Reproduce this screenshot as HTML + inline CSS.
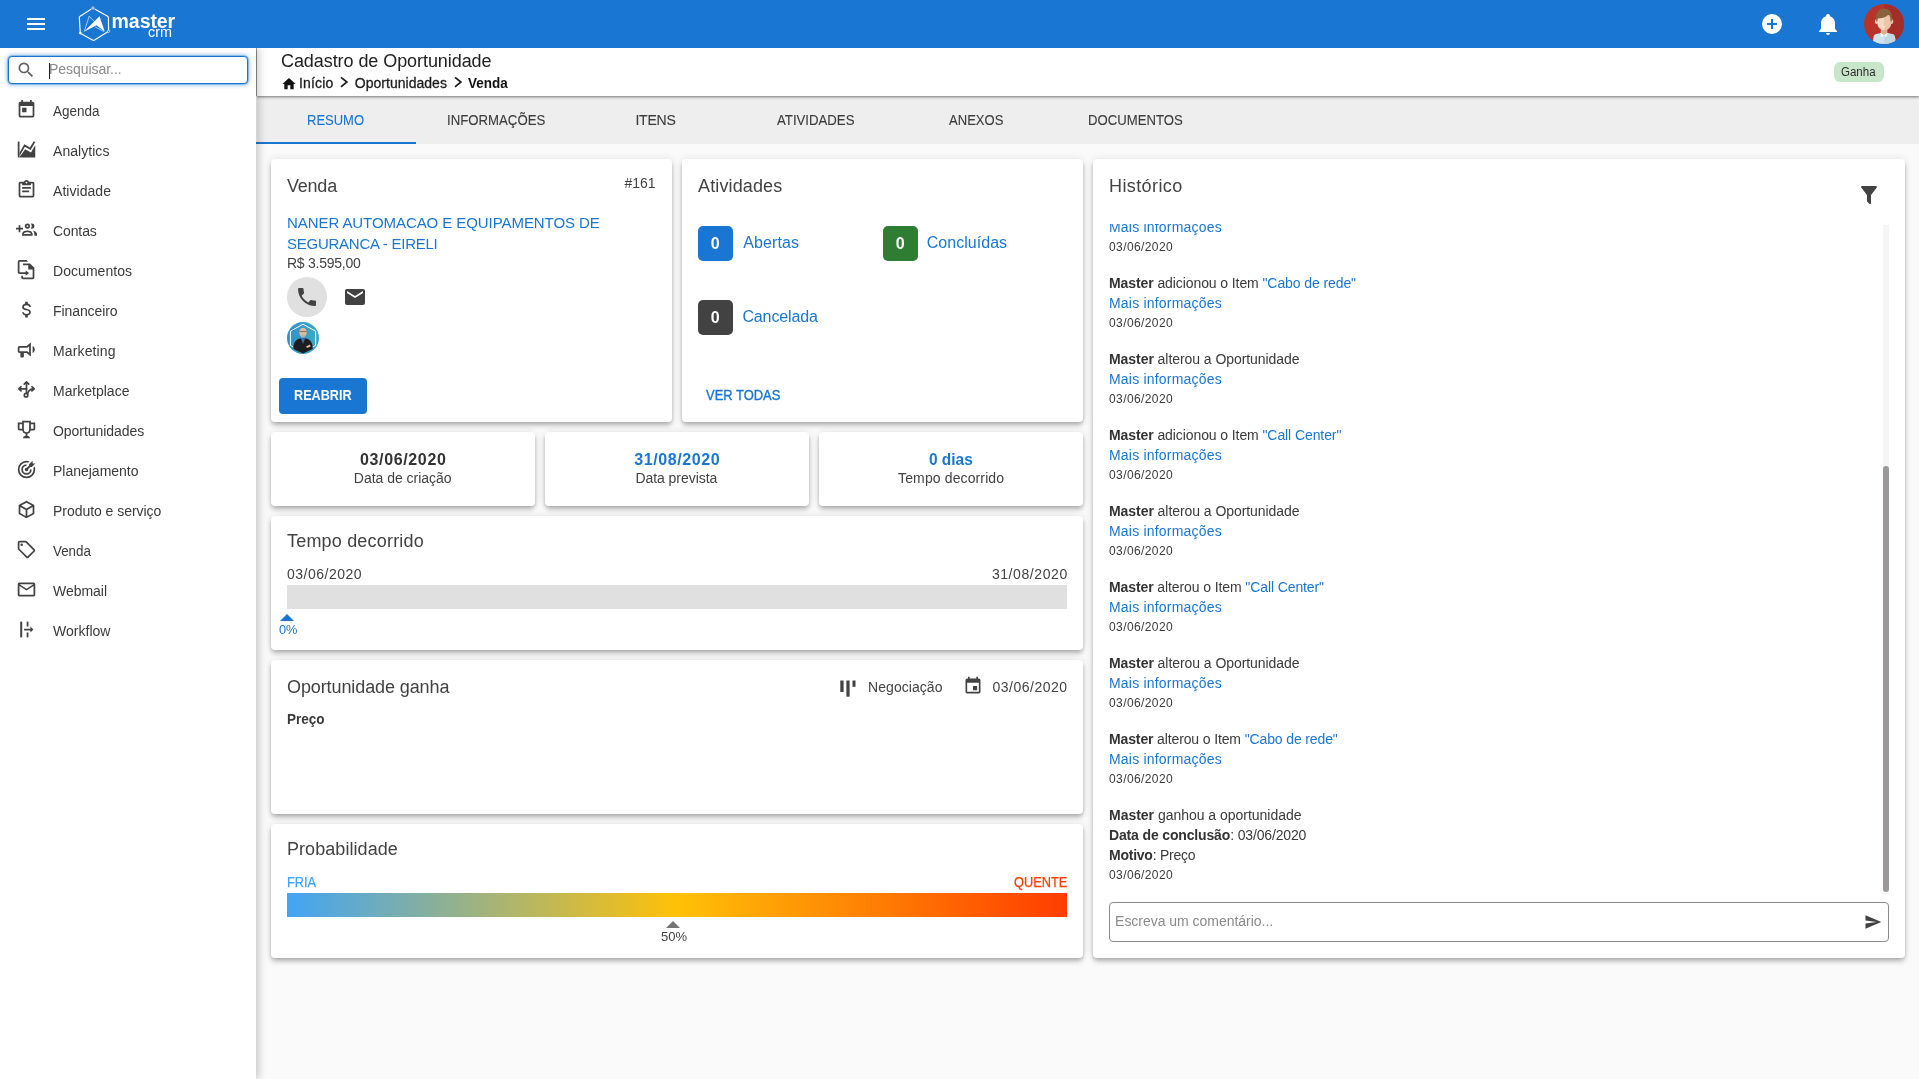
<!DOCTYPE html>
<html lang="pt-BR">
<head>
<meta charset="utf-8">
<title>Cadastro de Oportunidade - Master CRM</title>
<style>
*{box-sizing:border-box;margin:0;padding:0}
html,body{width:1919px;height:1079px;overflow:hidden;background:#fafafa}
body{font:400 14px/20px "Liberation Sans",sans-serif;color:#333}
.page,.page *{position:absolute}
.page{will-change:transform}
.page b{position:static;font-weight:700;color:#333}
.page p a,.page p b{position:static}
.t{white-space:nowrap;transform-origin:0 50%;line-height:20px;font-weight:400;font-style:normal;text-decoration:none}
a{color:#1976d2}
ul{list-style:none}
.i{display:block;overflow:visible}
.topbar{background:#1976d2;z-index:5}
.sidebar{background:#fff;z-index:4;box-shadow:3px 0 8px rgba(0,0,0,.2)}
.search{border:1px solid #1b72cc;border-radius:4px;background:#fff;box-shadow:0 0 0 .6px rgba(25,118,210,.5),0 0 4px 1px rgba(25,118,210,.5)}
.caret{width:1px;height:16px;background:#222}
.pagehead{background:#fff;z-index:3;box-shadow:0 1px 2px rgba(0,0,0,.38),0 2px 3px rgba(0,0,0,.12),-1px 0 0 rgba(0,0,0,.32)}
.chip{background:#c8e6c9;border-radius:6px}
.tabs{background:#eee;z-index:2}
.ink{height:2px;background:#1976d2}
.card{background:#fff;border-radius:4px;box-shadow:0 2px 4px -1px rgba(0,0,0,.2),0 4px 5px 0 rgba(0,0,0,.14),0 1px 10px 0 rgba(0,0,0,.12)}
.round{width:40px;height:40px;border-radius:50%;background:#e0e0e0}
.btn{background:#1976d2;border:0;border-radius:4px;font:inherit}
.badge{border-radius:5px}
.bar{width:780px;height:24px;background:#e0e0e0}
.grad{background:linear-gradient(90deg,#42a5f5 0%,#ffc107 50%,#ff3d00 100%)}
.tri{width:0;height:0;border:7px solid transparent;border-top-width:0;border-bottom-width:7px}
.scroll{overflow:hidden}
.track{left:774px;top:1px;width:6px;height:669px;background:#f5f5f5}
.thumb{left:774px;top:242px;width:6px;height:426px;background:#9b9999;border-radius:3px}
.comment{border:1px solid #8a8a8a;border-radius:4px}
</style>
</head>
<body>
<div class="page" style="left:0px;top:0px;width:1919px;height:1079px;">
  <header class="topbar" style="left:0px;top:0px;width:1919px;height:48px;">
    <svg class="i" style="left:24px;top:12px" width="24" height="24" viewBox="0 0 24 24" fill="#fff"><path d="M3,6H21V8H3V6M3,11H21V13H3V11M3,16H21V18H3V16Z"/></svg>
    <svg class="i" style="left:76px;top:4px" width="36" height="40" viewBox="0 0 36 40" fill="none" stroke="#fff" stroke-linejoin="round"><path d="M18.6,4.9L31.6,12.2Q32.4,12.7 32.4,13.6L32.6,27.2L18.6,36.1Q17.5,36.8 16.4,36.1L4.3,29.2L3.3,13.6Q3.3,12.7 4.1,12.2L15.4,4.9" stroke-width="1.15"/><circle cx="16.9" cy="4" r="1.1" fill="#1976d2" stroke-width=".8"/><circle cx="32.5" cy="27.3" r="1.1" fill="#1976d2" stroke-width=".7"/><circle cx="4.4" cy="29.1" r="1.1" fill="#fff" stroke-width=".5"/><path d="M8,27.8L23.5,12.3L28.7,27.5L20.4,21.2Z" fill="#fff" stroke="none"/><path d="M8.2,27.6L13.2,12.2L18.4,17.6M19,22.8L28.2,27.6" stroke-width=".6"/></svg>
    <span class="t logo" style="left:111.6px;top:11.2px;font-size:19.5px;font-weight:700;color:#fff;letter-spacing:-0.07px;">master</span>
    <span class="t logo" style="left:148.2px;top:22.4px;font-size:15.5px;color:#fff;transform:scaleX(0.9274);">crm</span>
    <svg class="i" style="left:1760px;top:12px" width="24" height="24" viewBox="0 0 24 24" fill="#fff"><path d="M17,13H13V17H11V13H7V11H11V7H13V11H17M12,2A10,10 0 0,0 2,12A10,10 0 0,0 12,22A10,10 0 0,0 22,12A10,10 0 0,0 12,2Z"/></svg>
    <svg class="i" style="left:1816px;top:12px" width="24" height="24" viewBox="0 0 24 24" fill="#fff"><path d="M21,19V20H3V19L5,17V11C5,7.9 7.03,5.17 10,4.29C10,4.19 10,4.1 10,4A2,2 0 0,1 12,2A2,2 0 0,1 14,4C14,4.1 14,4.19 14,4.29C16.97,5.17 19,7.9 19,11V17L21,19M14,21A2,2 0 0,1 12,23A2,2 0 0,1 10,21"/></svg>
    <svg class="i" style="left:1864px;top:4px" width="40" height="40" viewBox="0 0 40 40"><defs><clipPath id="av"><circle cx="20" cy="20" r="20"/></clipPath></defs><g clip-path="url(#av)"><rect width="40" height="40" fill="#b8342b"/><rect x="20" width="20" height="40" fill="#a52d29"/><path d="M8.6,40L9.6,32.6C9.9,31 11,30.2 12.6,29.9L17,28.9H23L27.6,29.9C29.4,30.2 30.6,31 30.9,32.6L32,40Z" fill="#cfe3ec"/><path d="M20,28.9H23L27.6,29.9C29.4,30.2 30.6,31 30.9,32.6L32,40H20Z" fill="#c1d6e1"/><path d="M16.8,24.6H23.3V29.2L20,31.6L16.8,29.2Z" fill="#dcae90"/><path d="M16.6,28.7L20,31.2L18.2,33.2L16.6,30.6Z M23.4,28.7L20,31.2L21.8,33.2L23.4,30.6Z" fill="#f5fafc"/><ellipse cx="12.5" cy="17.6" rx="1.7" ry="2.5" fill="#f2d6bd"/><ellipse cx="27.6" cy="17.6" rx="1.7" ry="2.5" fill="#e6bb9d"/><path d="M13.5,11H26.9V19.4C26.9,23.4 23.8,26 20.2,26C16.6,26 13.5,23.4 13.5,19.4Z" fill="#f3d9c0"/><path d="M20,11H26.9V19.4C26.9,23.4 23.8,26 20.2,26H20Z" fill="#ecc4a9"/><path d="M12.1,15C11.5,8.6 15,4.4 20,4.4C25.4,4.4 28.6,8.4 28,14.6L27.6,17.6L26.4,17.2C26.6,14.4 26,12 24.6,10.6C21.6,13.6 17,14.6 13.6,14.6L13.4,17.2L12.3,17.4Z" fill="#8b623c"/><path d="M18,22.3C19.2,22.9 20.8,22.9 22,22.3C21.4,23.8 18.6,23.8 18,22.3Z" fill="#fbf3ee"/></g></svg>
  </header>
  <nav class="sidebar" style="left:0px;top:48px;width:256px;height:1031px;">
    <div class="search" style="left:8px;top:8px;width:240px;height:28px;">
      <svg class="i" style="left:7px;top:3px" width="20" height="20" viewBox="0 0 24 24" fill="#616161"><path d="M9.5,3A6.5,6.5 0 0,1 16,9.5C16,11.11 15.41,12.59 14.44,13.73L14.71,14H15.5L20.5,19L19,20.5L14,15.5V14.71L13.73,14.44C12.59,15.41 11.11,16 9.5,16A6.5,6.5 0 0,1 3,9.5A6.5,6.5 0 0,1 9.5,3M9.5,5C7,5 5,7 5,9.5C5,12 7,14 9.5,14C12,14 14,12 14,9.5C14,7 12,5 9.5,5Z"/></svg>
      <i class="caret" style="left:40px;top:5.5px"></i>
      <span class="t" style="left:39.9px;top:1.7px;color:#8a8a8a;letter-spacing:-0.03px;">Pesquisar...</span>
    </div>
    <ul class="menu" style="left:0px;top:43px;width:256px;height:560px;">
      <li class="" style="left:0px;top:0px;width:256px;height:40px;">
        <svg class="i" style="left:16px;top:8px" width="21" height="21" viewBox="0 0 24 24" fill="#424242"><path d="M7,10H12V15H7M19,19H5V8H19M19,3H18V1H16V3H8V1H6V3H5C3.89,3 3,3.9 3,5V19A2,2 0 0,0 5,21H19A2,2 0 0,0 21,19V5A2,2 0 0,0 19,3Z"/></svg>
        <span class="t" style="left:53.0px;top:10.1px;color:#3a3a3a;transform:scaleX(0.9639);">Agenda</span>
      </li>
      <li class="" style="left:0px;top:40px;width:256px;height:40px;">
        <svg class="i" style="left:16px;top:8px" width="21" height="21" viewBox="0 0 24 24" fill="#424242"><path d="M2,3H4V21H2Z"/><path d="M4,15.6L9.5,6L16,9.78L20.24,2.45L21.97,3.45L16.74,12.5L10.23,8.75L4,19.5Z"/><path d="M4,21V20.6L10.6,11.6L17.1,15.3L22,7V21Z"/></svg>
        <span class="t" style="left:53.0px;top:10.1px;color:#3a3a3a;letter-spacing:0.05px;">Analytics</span>
      </li>
      <li class="" style="left:0px;top:80px;width:256px;height:40px;">
        <svg class="i" style="left:16px;top:8px" width="21" height="21" viewBox="0 0 24 24" fill="#424242"><path d="M19,3H14.82C14.4,1.84 13.3,1 12,1C10.7,1 9.6,1.84 9.18,3H5A2,2 0 0,0 3,5V19A2,2 0 0,0 5,21H19A2,2 0 0,0 21,19V5A2,2 0 0,0 19,3M12,3A1,1 0 0,1 13,4A1,1 0 0,1 12,5A1,1 0 0,1 11,4A1,1 0 0,1 12,3M7,7H17V5H19V19H5V5H7V7M17,11H7V9H17V11M15,15H7V13H15V15Z"/></svg>
        <span class="t" style="left:53.0px;top:10.1px;color:#3a3a3a;letter-spacing:0.04px;">Atividade</span>
      </li>
      <li class="" style="left:0px;top:120px;width:256px;height:40px;">
        <svg class="i" style="left:16px;top:8px" width="21" height="21" viewBox="0 0 24 24" fill="#424242"><path d="M13,11A3,3 0 1,0 10,8A3,3 0 0,0 13,11M13,7A1,1 0 1,1 12,8A1,1 0 0,1 13,7M17.11,10.86A5,5 0 0,0 17.11,5.14A2.91,2.91 0 0,1 18,5A3,3 0 0,1 18,11A2.91,2.91 0 0,1 17.11,10.86M13,13C7,13 7,17 7,17V19H19V17C19,17 19,13 13,13M9,17C9,16.71 9.32,15 13,15C16.5,15 16.94,16.56 17,17M24,17V19H21V17C21,15.54 20.37,14.21 19.38,13.29C23.91,13.73 24,17 24,17M8,12H5V15H3V12H0V10H3V7H5V10H8Z"/></svg>
        <span class="t" style="left:53.0px;top:10.1px;color:#3a3a3a;letter-spacing:-0.11px;">Contas</span>
      </li>
      <li class="" style="left:0px;top:160px;width:256px;height:40px;">
        <svg class="i" style="left:16px;top:8px" width="21" height="21" viewBox="0 0 24 24" fill="#424242"><path d="M14,3L12,1H4A2,2 0 0,0 2,3V15A2,2 0 0,0 4,17H11V19L15,16L11,13V15H4V3H14M21,10V21A2,2 0 0,1 19,23H8A2,2 0 0,1 6,21V19H8V21H19V12H14V7H8V5H16L21,10Z"/></svg>
        <span class="t" style="left:53.0px;top:10.1px;color:#3a3a3a;letter-spacing:0.05px;">Documentos</span>
      </li>
      <li class="" style="left:0px;top:200px;width:256px;height:40px;">
        <svg class="i" style="left:16px;top:8px" width="21" height="21" viewBox="0 0 24 24" fill="#424242"><path d="M7,15H9C9,16.08 10.37,17 12,17C13.63,17 15,16.08 15,15C15,13.9 13.96,13.5 11.76,12.97C9.64,12.44 7,11.78 7,9C7,7.21 8.47,5.69 10.5,5.18V3H13.5V5.18C15.53,5.69 17,7.21 17,9H15C15,7.92 13.63,7 12,7C10.37,7 9,7.92 9,9C9,10.1 10.04,10.5 12.24,11.03C14.36,11.56 17,12.22 17,15C17,16.79 15.53,18.31 13.5,18.82V21H10.5V18.82C8.47,18.31 7,16.79 7,15Z"/></svg>
        <span class="t" style="left:53.0px;top:10.1px;color:#3a3a3a;letter-spacing:-0.08px;">Financeiro</span>
      </li>
      <li class="" style="left:0px;top:240px;width:256px;height:40px;">
        <svg class="i" style="left:16px;top:8px" width="21" height="21" viewBox="0 0 24 24" fill="#424242"><path d="M12,8H4A2,2 0 0,0 2,10V14A2,2 0 0,0 4,16H5V20A1,1 0 0,0 6,21H8A1,1 0 0,0 9,20V16H12L17,20V4L12,8M15,15.6L13,14H4V10H13L15,8.4V15.6M21.5,12C21.5,13.71 20.54,15.26 19,16V8C20.53,8.75 21.5,10.3 21.5,12Z"/></svg>
        <span class="t" style="left:53.0px;top:10.1px;color:#3a3a3a;letter-spacing:0.13px;">Marketing</span>
      </li>
      <li class="" style="left:0px;top:280px;width:256px;height:40px;">
        <svg class="i" style="left:16px;top:8px" width="21" height="21" viewBox="0 0 24 24" fill="#424242"><g transform="translate(0,-.8)" fill="none" stroke="#424242" stroke-width="1.9" stroke-linecap="round" stroke-linejoin="round"><circle cx="11.5" cy="19.3" r="2"/><path d="M12,17.2V4.2M9.4,6.6L12,4L14.6,6.6"/><path d="M12,12H3.4M5.8,9.6L3.2,12L5.8,14.4"/><path d="M13.2,17.8C14,14 16,12 20.6,12M18.2,9.6L20.8,12L18.2,14.4"/></g></svg>
        <span class="t" style="left:53.0px;top:10.1px;color:#3a3a3a;letter-spacing:0.02px;">Marketplace</span>
      </li>
      <li class="" style="left:0px;top:320px;width:256px;height:40px;">
        <svg class="i" style="left:16px;top:8px" width="21" height="21" viewBox="0 0 24 24" fill="#424242"><path d="M7,2V4H2V11C2,12.1 2.9,13 4,13H7.1A5,5 0 0,0 11,16.9V19.08C8,19.54 8,22 8,22H16C16,22 16,19.54 13,19.08V16.9A5,5 0 0,0 16.9,13H20A2,2 0 0,0 22,11V4H17V2H7M9,4H15V12A3,3 0 0,1 12,15A3,3 0 0,1 9,12V4M4,6H7V11H4V6M17,6H20V11H17V6Z"/></svg>
        <span class="t" style="left:53.0px;top:10.1px;color:#3a3a3a;letter-spacing:-0.05px;">Oportunidades</span>
      </li>
      <li class="" style="left:0px;top:360px;width:256px;height:40px;">
        <svg class="i" style="left:16px;top:8px" width="21" height="21" viewBox="0 0 24 24" fill="#424242"><path d="M12,2A10,10 0 0,0 2,12A10,10 0 0,0 12,22A10,10 0 0,0 22,12C22,10.84 21.79,9.69 21.39,8.61L19.79,10.21C19.93,10.8 20,11.4 20,12A8,8 0 0,1 12,20A8,8 0 0,1 4,12A8,8 0 0,1 12,4C12.6,4 13.2,4.07 13.79,4.21L15.4,2.6C14.31,2.21 13.16,2 12,2M19,2L15,6V7.5L12.45,10.05C12.3,10 12.15,10 12,10A2,2 0 0,0 10,12A2,2 0 0,0 12,14A2,2 0 0,0 14,12C14,11.85 14,11.7 13.95,11.55L16.5,9H18L22,5H19V2M12,6A6,6 0 0,0 6,12A6,6 0 0,0 12,18A6,6 0 0,0 18,12H16A4,4 0 0,1 12,16A4,4 0 0,1 8,12A4,4 0 0,1 12,8V6Z"/></svg>
        <span class="t" style="left:53.0px;top:10.1px;color:#3a3a3a;letter-spacing:-0.01px;">Planejamento</span>
      </li>
      <li class="" style="left:0px;top:400px;width:256px;height:40px;">
        <svg class="i" style="left:16px;top:8px" width="21" height="21" viewBox="0 0 24 24" fill="#424242"><path d="M21,16.5C21,16.88 20.79,17.21 20.47,17.38L12.57,21.82C12.41,21.94 12.21,22 12,22C11.79,22 11.59,21.94 11.43,21.82L3.53,17.38C3.21,17.21 3,16.88 3,16.5V7.5C3,7.12 3.21,6.79 3.53,6.62L11.43,2.18C11.59,2.06 11.79,2 12,2C12.21,2 12.41,2.06 12.57,2.18L20.47,6.62C20.79,6.79 21,7.12 21,7.5V16.5M12,4.15L6.04,7.5L12,10.85L17.96,7.5L12,4.15M5,15.91L11,19.29V12.58L5,9.21V15.91M19,15.91V9.21L13,12.58V19.29L19,15.91Z"/></svg>
        <span class="t" style="left:53.0px;top:10.1px;color:#3a3a3a;letter-spacing:-0.04px;">Produto e serviço</span>
      </li>
      <li class="" style="left:0px;top:440px;width:256px;height:40px;">
        <svg class="i" style="left:16px;top:8px" width="21" height="21" viewBox="0 0 24 24" fill="#424242"><path d="M21.41,11.58L12.41,2.58C12.04,2.21 11.53,2 11,2H4A2,2 0 0,0 2,4V11C2,11.53 2.21,12.04 2.59,12.41L11.58,21.41C11.95,21.78 12.47,22 13,22C13.53,22 14.04,21.79 14.41,21.41L21.41,14.41C21.79,14.04 22,13.53 22,13C22,12.47 21.79,11.96 21.41,11.58M13,20L4,11V4H11L20,13M6.5,5A1.5,1.5 0 0,1 8,6.5A1.5,1.5 0 0,1 6.5,8A1.5,1.5 0 0,1 5,6.5A1.5,1.5 0 0,1 6.5,5Z"/></svg>
        <span class="t" style="left:53.0px;top:10.1px;color:#3a3a3a;transform:scaleX(0.9555);">Venda</span>
      </li>
      <li class="" style="left:0px;top:480px;width:256px;height:40px;">
        <svg class="i" style="left:16px;top:8px" width="21" height="21" viewBox="0 0 24 24" fill="#424242"><path d="M22,6C22,4.9 21.1,4 20,4H4C2.9,4 2,4.9 2,6V18C2,19.1 2.9,20 4,20H20C21.1,20 22,19.1 22,18V6M20,6L12,11L4,6H20M20,18H4V8L12,13L20,8V18Z"/></svg>
        <span class="t" style="left:53.0px;top:10.1px;color:#3a3a3a;letter-spacing:-0.03px;">Webmail</span>
      </li>
      <li class="" style="left:0px;top:520px;width:256px;height:40px;">
        <svg class="i" style="left:16px;top:8px" width="21" height="21" viewBox="0 0 24 24" fill="#424242"><path d="M4.8,3H7.1V21H4.8Z"/><path d="M12.2,3H14.2V8.6H12.2Z"/><path d="M12.2,15.4H14.2V21H12.2Z"/><path d="M9.3,11H16.5V8.6L19.9,12L16.5,15.4V13H9.3Z"/></svg>
        <span class="t" style="left:53.0px;top:10.1px;color:#3a3a3a;letter-spacing:0.02px;">Workflow</span>
      </li>
    </ul>
  </nav>
  <div class="pagehead" style="left:257px;top:48px;width:1662px;height:48px;">
    <h1 class="t" style="left:24.0px;top:2.5px;font-size:18px;color:#212121;letter-spacing:-0.07px;">Cadastro de Oportunidade</h1>
    <svg class="i" style="left:24.100000000000023px;top:27.900000000000006px" width="16" height="16" viewBox="0 0 24 24" fill="#111"><path d="M10,20V14H14V20H19V12H22L12,3L2,12H5V20H10Z"/></svg>
    <span class="t" style="left:42.0px;top:24.9px;color:#1c1c1c;letter-spacing:0.18px;-webkit-text-stroke:0.3px currentColor;">Início</span>
    <svg class="i" style="left:83px;top:28px" width="8" height="12" viewBox="0 0 8 12" fill="none" stroke="#1a1a1a" stroke-width="1.7"><path d="M1,1.3L6.9,6L1,10.8"/></svg>
    <span class="t" style="left:97.8px;top:24.9px;color:#1c1c1c;letter-spacing:0.02px;-webkit-text-stroke:0.3px currentColor;">Oportunidades</span>
    <svg class="i" style="left:196.6px;top:28px" width="8" height="12" viewBox="0 0 8 12" fill="none" stroke="#1a1a1a" stroke-width="1.7"><path d="M1,1.3L6.9,6L1,10.8"/></svg>
    <span class="t" style="left:211.1px;top:24.9px;font-weight:700;color:#111;transform:scaleX(0.9621);">Venda</span>
    <div class="chip" style="left:1577px;top:14px;width:50px;height:20px;">
      <span class="t" style="left:7.2px;top:-0.5px;font-size:12px;color:#2c2c2c;transform:scaleX(0.9586);">Ganha</span>
    </div>
  </div>
  <div class="tabs" style="left:257px;top:96px;width:1662px;height:48px;">
    <i class="ink" style="left:-1px;top:46px;width:160px"></i>
    <a class="t" style="left:50.2px;top:14.1px;color:#1976d2;transform:scaleX(0.9282);-webkit-text-stroke:0.12px currentColor;">RESUMO</a>
    <a class="t" style="left:189.5px;top:14.1px;color:#3c3c3c;transform:scaleX(0.9427);-webkit-text-stroke:0.12px currentColor;">INFORMAÇÕES</a>
    <a class="t" style="left:378.4px;top:14.1px;color:#3c3c3c;letter-spacing:-0.22px;-webkit-text-stroke:0.12px currentColor;">ITENS</a>
    <a class="t" style="left:520.4px;top:14.1px;color:#3c3c3c;transform:scaleX(0.9423);-webkit-text-stroke:0.12px currentColor;">ATIVIDADES</a>
    <a class="t" style="left:692.0px;top:14.1px;color:#3c3c3c;transform:scaleX(0.9321);-webkit-text-stroke:0.12px currentColor;">ANEXOS</a>
    <a class="t" style="left:831.3px;top:14.1px;color:#3c3c3c;transform:scaleX(0.9389);-webkit-text-stroke:0.12px currentColor;">DOCUMENTOS</a>
  </div>
  <section class="card" style="left:271px;top:159px;width:401px;height:263px;">
    <h2 class="t" style="left:16.0px;top:16.5px;font-size:18px;color:#424242;letter-spacing:-0.22px;">Venda</h2>
    <span class="t" style="left:353.4px;top:14.3px;color:#424242;letter-spacing:0.04px;">#161</span>
    <a class="t" style="left:16.0px;top:53.6px;font-size:15px;color:#1976d2;letter-spacing:-0.07px;">NANER AUTOMACAO E EQUIPAMENTOS DE</a>
    <a class="t" style="left:16.0px;top:74.5px;font-size:15px;color:#1976d2;letter-spacing:-0.25px;">SEGURANCA - EIRELI</a>
    <span class="t" style="left:16.0px;top:93.9px;color:#424242;letter-spacing:-0.25px;">R$ 3.595,00</span>
    <i class="round" style="left:16px;top:118px"></i>
    <svg class="i" style="left:24px;top:126px" width="24" height="24" viewBox="0 0 24 24" fill="#424242"><path d="M6.62,10.79C8.06,13.62 10.38,15.94 13.21,17.38L15.41,15.18C15.69,14.9 16.08,14.82 16.43,14.93C17.55,15.3 18.75,15.5 20,15.5A1,1 0 0,1 21,16.5V20A1,1 0 0,1 20,21A17,17 0 0,1 3,4A1,1 0 0,1 4,3H7.5A1,1 0 0,1 8.5,4C8.5,5.25 8.7,6.45 9.07,7.57C9.18,7.92 9.1,8.31 8.82,8.59L6.62,10.79Z"/></svg>
    <svg class="i" style="left:72px;top:126px" width="24" height="24" viewBox="0 0 24 24" fill="#424242"><path d="M20,8L12,13L4,8V6L12,11L20,6M20,4H4C2.89,4 2,4.89 2,6V18A2,2 0 0,0 4,20H20A2,2 0 0,0 22,18V6C22,4.89 21.1,4 20,4Z"/></svg>
    <svg class="i" style="left:16px;top:163px" width="32" height="32" viewBox="0 0 32 32"><defs><linearGradient id="ag" x1="0" x2="1"><stop offset="0" stop-color="#2f8fc6"/><stop offset="1" stop-color="#3eaac9"/></linearGradient><clipPath id="ac"><circle cx="16" cy="16" r="15.8"/></clipPath></defs><circle cx="16" cy="16" r="16" fill="url(#ag)"/><g clip-path="url(#ac)"><path d="M16,2.2L28.6,9.2V23.4L16,30.4L3.4,23.4V9.2Z" fill="none" stroke="#fff" stroke-width="1"/><path d="M6.4,27C6,21 8.4,17.6 13,16.4H19C23.6,17.6 26,21 25.6,27L16,31.6Z" fill="#1d1d1f"/><path d="M13.6,15.6H18.4L16,22Z" fill="#3f6db3"/><ellipse cx="16" cy="10.4" rx="3.7" ry="4.7" fill="#e9b795"/><path d="M13.6,12.6H18.4L17.6,15.6H14.4Z" fill="#b9b4ae"/><path d="M12.6,9.6H19.4" stroke="#5a4a40" stroke-width=".7"/><path d="M19,24.4L23,22.6L23.6,24.6L20,26Z" fill="#e9b795"/></g></svg>
    <button class="btn" style="left:8px;top:219px;width:88px;height:36px;">
      <span class="t" style="left:15.0px;top:7.1px;font-weight:700;color:#fff;transform:scaleX(0.9038);">REABRIR</span>
    </button>
  </section>
  <section class="card" style="left:682px;top:159px;width:401px;height:263px;">
    <h2 class="t" style="left:16.0px;top:16.5px;font-size:18px;color:#424242;letter-spacing:0.13px;">Atividades</h2>
    <div class="badge" style="left:16px;top:67px;width:35px;height:35px;background:#1976d2;">
      <span class="t" style="left:12.8px;top:7.8px;font-size:16px;font-weight:700;color:#fff;">0</span>
    </div>
    <a class="t" style="left:61.2px;top:73.7px;font-size:16px;color:#1976d2;letter-spacing:0.1px;">Abertas</a>
    <div class="badge" style="left:201px;top:67px;width:35px;height:35px;background:#2e7d32;">
      <span class="t" style="left:12.8px;top:7.8px;font-size:16px;font-weight:700;color:#fff;">0</span>
    </div>
    <a class="t" style="left:244.7px;top:73.7px;font-size:16px;color:#1976d2;letter-spacing:0.04px;">Concluídas</a>
    <div class="badge" style="left:16px;top:141px;width:35px;height:35px;background:#424242;">
      <span class="t" style="left:12.8px;top:7.8px;font-size:16px;font-weight:700;color:#fff;">0</span>
    </div>
    <a class="t" style="left:60.4px;top:147.7px;font-size:16px;color:#1976d2;letter-spacing:-0.11px;">Cancelada</a>
    <a class="t" style="left:24.1px;top:226.4px;color:#1976d2;transform:scaleX(0.9244);-webkit-text-stroke:0.35px currentColor;">VER TODAS</a>
  </section>
  <section class="card" style="left:271px;top:432px;width:264px;height:74px;">
    <span class="t" style="left:89.0px;top:18.4px;font-size:16px;font-weight:700;color:#333;letter-spacing:0.64px;">03/06/2020</span>
    <span class="t" style="left:82.8px;top:36.1px;color:#424242;letter-spacing:-0.02px;">Data de criação</span>
  </section>
  <section class="card" style="left:545px;top:432px;width:264px;height:74px;">
    <span class="t" style="left:89.3px;top:18.4px;font-size:16px;font-weight:700;color:#1976d2;letter-spacing:0.58px;">31/08/2020</span>
    <span class="t" style="left:90.4px;top:36.1px;color:#424242;letter-spacing:-0.05px;">Data prevista</span>
  </section>
  <section class="card" style="left:819px;top:432px;width:264px;height:74px;">
    <span class="t" style="left:110.1px;top:18.4px;font-size:16px;font-weight:700;color:#1976d2;transform:scaleX(0.9644);">0 dias</span>
    <span class="t" style="left:79.1px;top:36.1px;color:#424242;letter-spacing:0.12px;">Tempo decorrido</span>
  </section>
  <section class="card" style="left:271px;top:516px;width:812px;height:134px;">
    <h2 class="t" style="left:16.0px;top:15.1px;font-size:18px;color:#424242;letter-spacing:0.19px;">Tempo decorrido</h2>
    <span class="t" style="left:16.0px;top:48.1px;color:#424242;letter-spacing:0.5px;">03/06/2020</span>
    <span class="t" style="left:720.9px;top:48.1px;color:#424242;letter-spacing:0.58px;">31/08/2020</span>
    <i class="bar" style="left:16px;top:69px"></i>
    <i class="tri" style="left:9px;top:98px;border-bottom-color:#1976d2"></i>
    <span class="t" style="left:7.8px;top:104.4px;font-size:13px;color:#1976d2;transform:scaleX(0.9829);">0%</span>
  </section>
  <section class="card" style="left:271px;top:660px;width:812px;height:154px;">
    <h2 class="t" style="left:16.0px;top:16.5px;font-size:18px;color:#424242;letter-spacing:-0.1px;">Oportunidade ganha</h2>
    <svg class="i" style="left:569px;top:20px" width="16" height="17" viewBox="0 0 16 17" fill="#424242"><rect x=".3" y=".5" width="3.3" height="11.5"/><rect x="6.4" y=".5" width="3.2" height="16.2"/><rect x="12.5" y=".5" width="3" height="6.3"/></svg>
    <span class="t" style="left:597.1px;top:17.4px;color:#424242;letter-spacing:0.05px;">Negociação</span>
    <svg class="i" style="left:691.6px;top:16.299999999999955px" width="20" height="20" viewBox="0 0 24 24" fill="#424242"><path d="M19,19H5V8H19M16,1V3H8V1H6V3H5C3.89,3 3,3.89 3,5V19A2,2 0 0,0 5,21H19A2,2 0 0,0 21,19V5C21,3.89 20.1,3 19,3H18V1M17,12H12V17H17V12Z"/></svg>
    <span class="t" style="left:721.5px;top:17.4px;color:#424242;letter-spacing:0.51px;">03/06/2020</span>
    <span class="t" style="left:16.0px;top:49.1px;font-weight:700;color:#3a3a3a;transform:scaleX(0.9642);">Preço</span>
  </section>
  <section class="card" style="left:271px;top:824px;width:812px;height:134px;">
    <h2 class="t" style="left:16.0px;top:15.1px;font-size:18px;color:#424242;letter-spacing:0.06px;">Probabilidade</h2>
    <span class="t" style="left:16.0px;top:48.1px;color:#42a5f5;transform:scaleX(0.9123);-webkit-text-stroke:0.25px currentColor;">FRIA</span>
    <span class="t" style="left:742.9px;top:48.1px;color:#ff3d00;transform:scaleX(0.9127);-webkit-text-stroke:0.25px currentColor;">QUENTE</span>
    <i class="bar grad" style="left:16px;top:69px"></i>
    <i class="tri" style="left:395.2px;top:97px;border-bottom-color:#757575"></i>
    <span class="t" style="left:389.5px;top:103.2px;font-size:13.5px;color:#424242;transform:scaleX(0.9641);">50%</span>
  </section>
  <section class="card" style="left:1093px;top:159px;width:812px;height:799px;">
    <h2 class="t" style="left:16.0px;top:16.5px;font-size:18px;color:#424242;letter-spacing:0.4px;">Histórico</h2>
    <svg class="i" style="left:764px;top:24px" width="24" height="24" viewBox="0 0 24 24" fill="#424242"><path d="M14,12V19.88C14.04,20.18 13.94,20.5 13.71,20.71C13.32,21.1 12.69,21.1 12.3,20.71L10.29,18.7C10.06,18.47 9.96,18.16 10,17.87V12H9.97L4.21,4.62C3.87,4.19 3.95,3.56 4.38,3.22C4.57,3.08 4.78,3 5,3V3H19V3C19.22,3 19.43,3.08 19.62,3.22C20.05,3.56 20.13,4.19 19.79,4.62L14.03,12H14Z"/></svg>
    <div class="scroll" style="left:16px;top:65px;width:780px;height:670px;">
      <i class="track"></i><i class="thumb"></i>
      <a class="t" style="left:0.0px;top:-6.9px;color:#1976d2;letter-spacing:0.2px;">Mais informações</a>
      <time class="t" style="left:0.0px;top:12.8px;font-size:12px;color:#3a3a3a;letter-spacing:0.4px;">03/06/2020</time>
      <p class="t" style="left:0.0px;top:49.1px;color:#3a3a3a;letter-spacing:-0.09px;"><b>Master</b> adicionou o Item <a>&quot;Cabo de rede&quot;</a></p>
      <a class="t" style="left:0.0px;top:69.1px;color:#1976d2;letter-spacing:0.2px;">Mais informações</a>
      <time class="t" style="left:0.0px;top:88.8px;font-size:12px;color:#3a3a3a;letter-spacing:0.4px;">03/06/2020</time>
      <p class="t" style="left:0.0px;top:125.1px;color:#3a3a3a;letter-spacing:-0.06px;"><b>Master</b> alterou a Oportunidade</p>
      <a class="t" style="left:0.0px;top:145.1px;color:#1976d2;letter-spacing:0.2px;">Mais informações</a>
      <time class="t" style="left:0.0px;top:164.8px;font-size:12px;color:#3a3a3a;letter-spacing:0.4px;">03/06/2020</time>
      <p class="t" style="left:0.0px;top:201.1px;color:#3a3a3a;letter-spacing:-0.09px;"><b>Master</b> adicionou o Item <a>&quot;Call Center&quot;</a></p>
      <a class="t" style="left:0.0px;top:221.1px;color:#1976d2;letter-spacing:0.2px;">Mais informações</a>
      <time class="t" style="left:0.0px;top:240.8px;font-size:12px;color:#3a3a3a;letter-spacing:0.4px;">03/06/2020</time>
      <p class="t" style="left:0.0px;top:277.1px;color:#3a3a3a;letter-spacing:-0.06px;"><b>Master</b> alterou a Oportunidade</p>
      <a class="t" style="left:0.0px;top:297.1px;color:#1976d2;letter-spacing:0.2px;">Mais informações</a>
      <time class="t" style="left:0.0px;top:316.8px;font-size:12px;color:#3a3a3a;letter-spacing:0.4px;">03/06/2020</time>
      <p class="t" style="left:0.0px;top:353.1px;color:#3a3a3a;letter-spacing:-0.1px;"><b>Master</b> alterou o Item <a>&quot;Call Center&quot;</a></p>
      <a class="t" style="left:0.0px;top:373.1px;color:#1976d2;letter-spacing:0.2px;">Mais informações</a>
      <time class="t" style="left:0.0px;top:392.8px;font-size:12px;color:#3a3a3a;letter-spacing:0.4px;">03/06/2020</time>
      <p class="t" style="left:0.0px;top:429.1px;color:#3a3a3a;letter-spacing:-0.06px;"><b>Master</b> alterou a Oportunidade</p>
      <a class="t" style="left:0.0px;top:449.1px;color:#1976d2;letter-spacing:0.2px;">Mais informações</a>
      <time class="t" style="left:0.0px;top:468.8px;font-size:12px;color:#3a3a3a;letter-spacing:0.4px;">03/06/2020</time>
      <p class="t" style="left:0.0px;top:505.1px;color:#3a3a3a;letter-spacing:-0.13px;"><b>Master</b> alterou o Item <a>&quot;Cabo de rede&quot;</a></p>
      <a class="t" style="left:0.0px;top:525.1px;color:#1976d2;letter-spacing:0.2px;">Mais informações</a>
      <time class="t" style="left:0.0px;top:544.8px;font-size:12px;color:#3a3a3a;letter-spacing:0.4px;">03/06/2020</time>
      <p class="t" style="left:0.0px;top:581.1px;color:#3a3a3a;letter-spacing:-0.02px;"><b>Master</b> ganhou a oportunidade</p>
      <p class="t" style="left:0.0px;top:601.1px;color:#3a3a3a;letter-spacing:-0.15px;"><b>Data de conclusão</b>: 03/06/2020</p>
      <p class="t" style="left:0.0px;top:621.1px;color:#3a3a3a;letter-spacing:-0.24px;"><b>Motivo</b>: Preço</p>
      <time class="t" style="left:0.0px;top:640.8px;font-size:12px;color:#3a3a3a;letter-spacing:0.4px;">03/06/2020</time>
    </div>
    <div class="comment" style="left:16px;top:743px;width:780px;height:40px;">
      <span class="t" style="left:5.1px;top:8.1px;color:#8a8a8a;letter-spacing:-0.03px;">Escreva um comentário...</span>
      <svg class="i" style="left:753.5px;top:10px" width="18" height="18" viewBox="0 0 24 24" fill="#424242"><path d="M2,21L23,12L2,3V10L17,12L2,14V21Z"/></svg>
    </div>
  </section>
</div>
</body>
</html>
